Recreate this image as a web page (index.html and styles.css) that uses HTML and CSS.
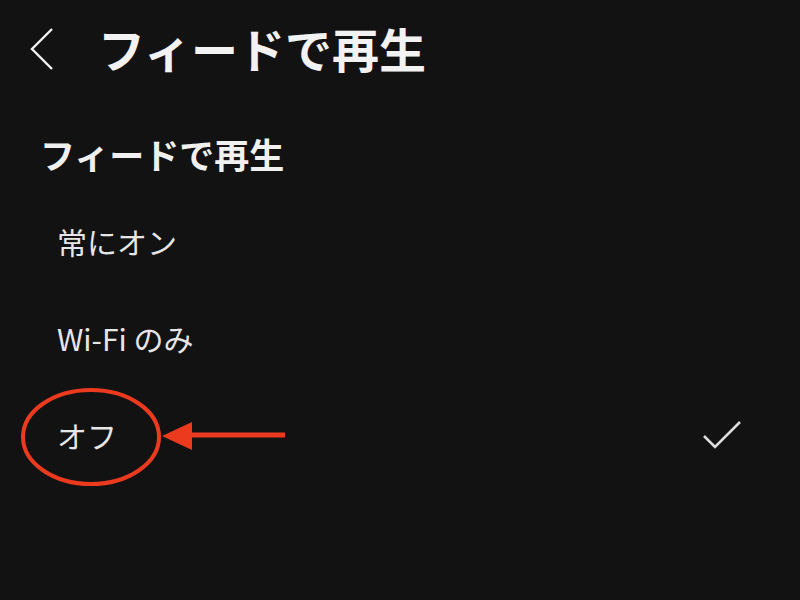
FILE: index.html
```html
<!DOCTYPE html>
<html lang="ja">
<head>
<meta charset="utf-8">
<link rel="stylesheet" href="styles.css">
</head>
<body>
<div class="screen">
  <header class="topbar">
    <svg class="back" width="26" height="44" viewBox="0 0 26 44"><path d="M23 2 L3 22 L23 42" fill="none" stroke="#f2f2f2" stroke-width="2.4"/></svg>
    <h1 class="title">フィードで再生</h1>
  </header>
  <h2 class="section">フィードで再生</h2>
  <ul class="options">
    <li class="option">常にオン</li>
    <li class="option">Wi-Fi のみ</li>
    <li class="option selected"><span>オフ</span>
      <svg class="check" width="40" height="32" viewBox="0 0 40 32"><path d="M2 17 L13 28 L38 3" fill="none" stroke="#dcdcdc" stroke-width="2.6"/></svg>
    </li>
  </ul>
  <svg class="annotation" width="800" height="600" viewBox="0 0 800 600">
    <ellipse cx="91" cy="437" rx="68" ry="47" fill="none" stroke="#ec3a1f" stroke-width="4"/>
    <line x1="285" y1="435" x2="185" y2="435" stroke="#ec3a1f" stroke-width="5"/>
    <polygon points="162,436 192,422 192,450" fill="#ec3a1f"/>
  </svg>
</div>
</body>
</html>
```
FILE: styles.css
```css
html, body {
  margin: 0;
  padding: 0;
  background: #121212;
}
.screen {
  position: relative;
  width: 800px;
  height: 600px;
  background: #121212;
  font-family: "Noto Sans CJK JP", "Noto Sans", sans-serif;
  color: #f0f0f0;
  overflow: hidden;
}
.topbar {
  display: flex;
  align-items: center;
  height: 94px;
  padding-left: 29px;
  gap: 43px;
}
.back {
  display: block;
  margin-top: 4px;
}
.title {
  margin: 0;
  font-size: 47px;
  font-weight: 700;
  line-height: 1;
  color: #f2f2f2;
}
.section {
  margin: 42px 0 0 40px;
  font-size: 35px;
  font-weight: 700;
  line-height: 1;
  color: #f0f0f0;
}
.options {
  list-style: none;
  margin: 21px 0 0 0;
  padding: 0;
}
.option {
  display: flex;
  align-items: center;
  justify-content: space-between;
  height: 97px;
  padding: 0 58px 0 57px;
  font-size: 30px;
  color: #e6e6e6;
}
.check {
  display: block;
}
.annotation {
  position: absolute;
  left: 0;
  top: 0;
  pointer-events: none;
}
```
